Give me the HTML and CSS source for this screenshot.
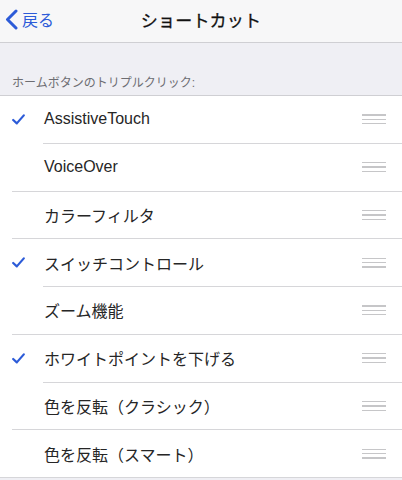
FILE: index.html
```html
<html>

  <head>

    <title>
      ショートカット
    </title>

    <link rel="stylesheet" href="styles.css">

  </head>

  <body>

    <div class = "navbar">
      <div class = "back">
        <svg class = "chevron" width = "13" height = "21" viewBox = "0 0 13 21">
          <path d = "M11 2 L2.5 10.5 L11 19" fill = "none" stroke = "currentColor" stroke-width = "3" stroke-linecap = "round" stroke-linejoin = "round"/>
        </svg>
        <span>戻る</span>
      </div>
      <div class = "title">ショートカット</div>
      <div></div>
    </div>

    <div class = "groupHeader">ホームボタンのトリプルクリック:</div>

    <div class = "list">

      <div class = "row checked">
        <div class = "check"><svg width = "13" height = "11" viewBox = "0 0 13 11"><path d = "M1.2 6 L4.8 9.4 L11.8 1.4" fill = "none" stroke = "currentColor" stroke-width = "2.2" stroke-linecap = "round" stroke-linejoin = "round"/></svg></div>
        <div class = "label">AssistiveTouch</div>
        <div class = "grip"><i></i><i></i><i></i></div>
      </div>
      <div class = "sep inset"></div>

      <div class = "row">
        <div class = "check"></div>
        <div class = "label">VoiceOver</div>
        <div class = "grip"><i></i><i></i><i></i></div>
      </div>
      <div class = "sep wide"></div>

      <div class = "row">
        <div class = "check"></div>
        <div class = "label">カラーフィルタ</div>
        <div class = "grip"><i></i><i></i><i></i></div>
      </div>
      <div class = "sep wide"></div>

      <div class = "row checked">
        <div class = "check"><svg width = "13" height = "11" viewBox = "0 0 13 11"><path d = "M1.2 6 L4.8 9.4 L11.8 1.4" fill = "none" stroke = "currentColor" stroke-width = "2.2" stroke-linecap = "round" stroke-linejoin = "round"/></svg></div>
        <div class = "label">スイッチコントロール</div>
        <div class = "grip"><i></i><i></i><i></i></div>
      </div>
      <div class = "sep inset"></div>

      <div class = "row">
        <div class = "check"></div>
        <div class = "label">ズーム機能</div>
        <div class = "grip"><i></i><i></i><i></i></div>
      </div>
      <div class = "sep wide"></div>

      <div class = "row checked">
        <div class = "check"><svg width = "13" height = "11" viewBox = "0 0 13 11"><path d = "M1.2 6 L4.8 9.4 L11.8 1.4" fill = "none" stroke = "currentColor" stroke-width = "2.2" stroke-linecap = "round" stroke-linejoin = "round"/></svg></div>
        <div class = "label">ホワイトポイントを下げる</div>
        <div class = "grip"><i></i><i></i><i></i></div>
      </div>
      <div class = "sep inset"></div>

      <div class = "row">
        <div class = "check"></div>
        <div class = "label">色を反転（クラシック）</div>
        <div class = "grip"><i></i><i></i><i></i></div>
      </div>
      <div class = "sep wide"></div>

      <div class = "row">
        <div class = "check"></div>
        <div class = "label">色を反転（スマート）</div>
        <div class = "grip"><i></i><i></i><i></i></div>
      </div>
      <div class = "sep full"></div>

    </div>

  </body>

</html>
```

FILE: styles.css
```css
body
{
  margin: 0;
  background: #efeff4;
  font-family: "Liberation Sans", "Noto Sans CJK JP", sans-serif;
  color: #262626;
}

.navbar
{
  display: grid;
  grid-template-columns: 1fr auto 1fr;
  align-items: center;
  height: 43px;
  box-sizing: border-box;
  padding-bottom: 4px;
  background: #f7f7f8;
  border-bottom: 1px solid #cfcfd3;
}

.back
{
  display: flex;
  align-items: center;
  gap: 4px;
  padding-left: 5px;
  color: #2c5bd8;
  font-size: 16px;
}

.chevron
{
  display: block;
}

.title
{
  font-size: 17px;
  color: #111111;
  letter-spacing: 0.2px;
  -webkit-text-stroke: 0.3px #111111;
}

.groupHeader
{
  height: 53px;
  box-sizing: border-box;
  padding: 0 12px 5px 12px;
  display: flex;
  align-items: flex-end;
  font-size: 12px;
  color: #6d6d72;
  border-bottom: 1px solid #cfcfd3;
}

.list
{
  background: #ffffff;
}

.row
{
  display: flex;
  align-items: center;
  height: 46.75px;
}

.check
{
  width: 32px;
  padding-left: 12px;
  color: #2c5bd8;
  display: flex;
  align-items: center;
}

.check svg
{
  display: block;
}

.label
{
  flex: 1;
  font-size: 16px;
}

.grip
{
  display: flex;
  flex-direction: column;
  gap: 3px;
  width: 24px;
  margin-right: 16px;
}

.grip i
{
  display: block;
  height: 1.3px;
  background: #c6c6c8;
}

.sep
{
  height: 1px;
  background: #d6d6d9;
}

.inset
{
  margin-left: 43px;
}

.wide
{
  margin-left: 12px;
}
```
